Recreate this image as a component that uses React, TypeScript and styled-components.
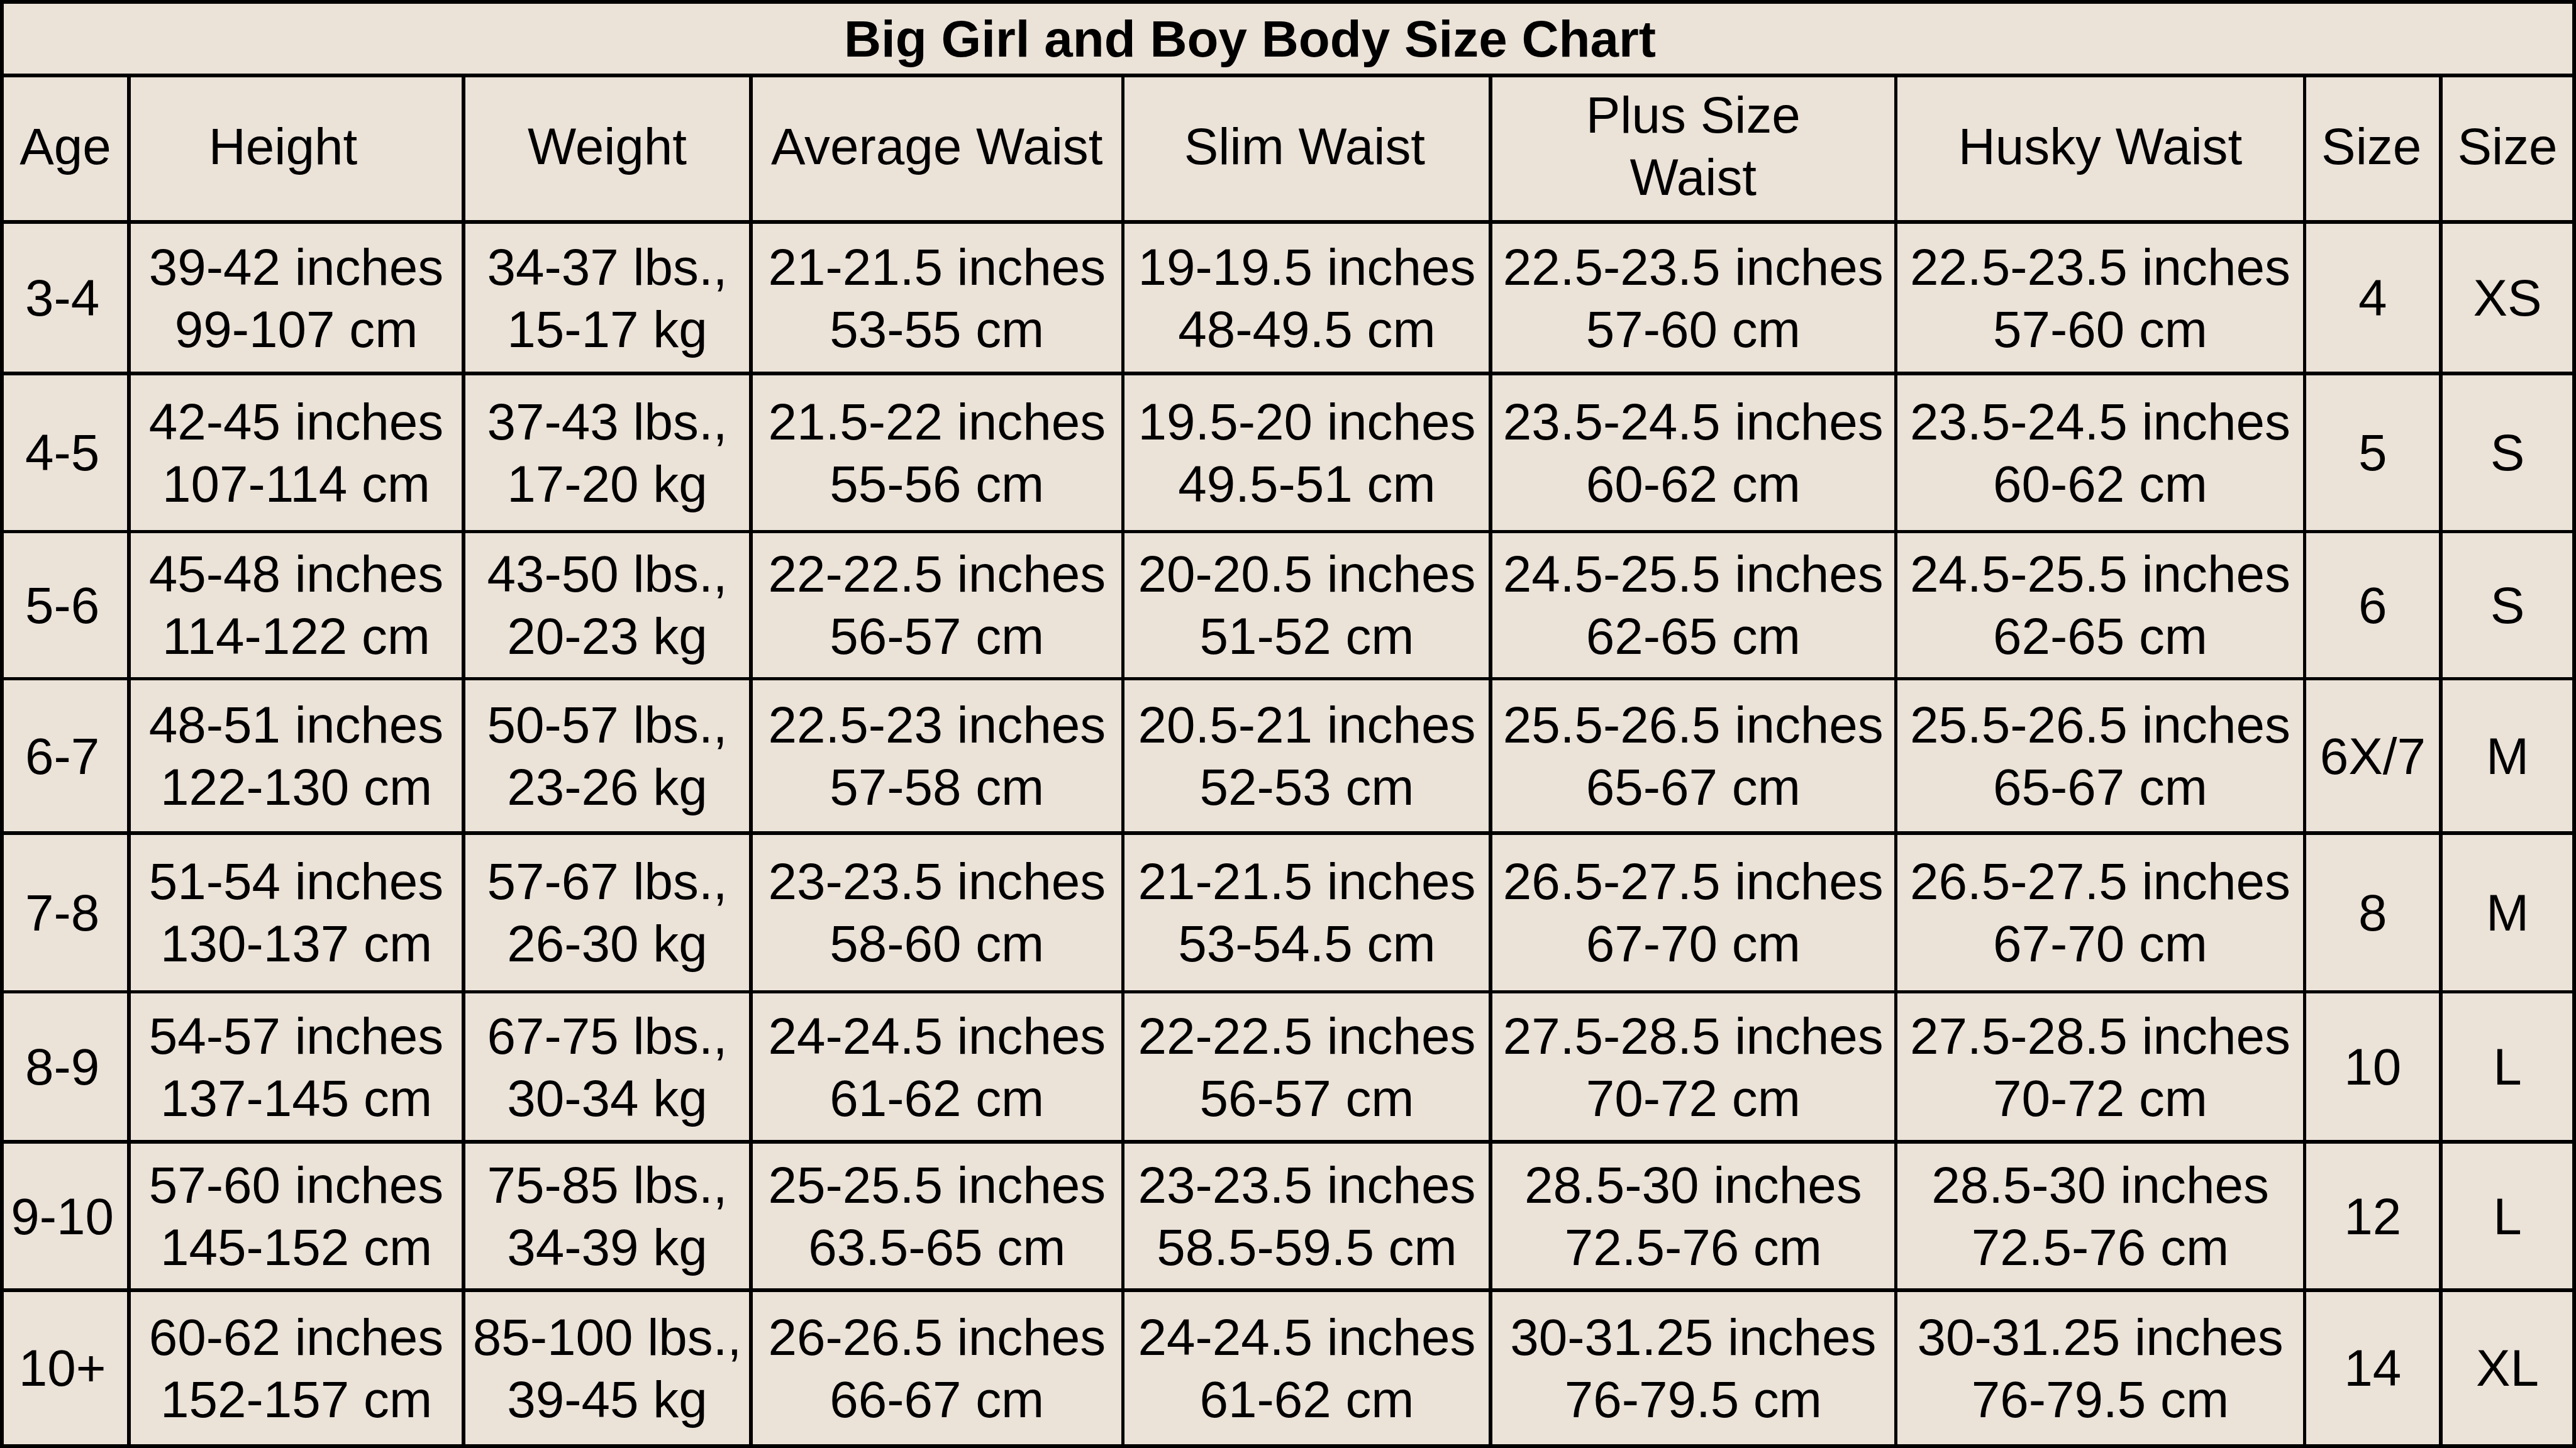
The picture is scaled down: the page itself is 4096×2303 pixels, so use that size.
import React from "react";
import styled, { createGlobalStyle } from "styled-components";

const S = 4096 / 5832;
const px = (v: number) => `${(v * S).toFixed(2)}px`;

const LINE = 8;
const COLS = [280, 749.5, 642.5, 834.5, 824.5, 909, 918, 300, 294];
const ROWS = [159, 324, 335, 350, 325, 342, 351, 332, 328, 345];

const GlobalStyle = createGlobalStyle`
  html, body {
    margin: 0;
    padding: 0;
    background: #ebe2d8;
    overflow: hidden;
  }
  #root {
    width: 4096px;
    height: 2303px;
  }
`;

const Chart = styled.div`
  display: grid;
  grid-template-columns: ${COLS.map(px).join(" ")};
  grid-template-rows: ${ROWS.map(px).join(" ")};
  gap: ${px(LINE)};
  padding: ${px(LINE)};
  background: #000;
  width: max-content;
  font-family: "Liberation Sans", Arial, sans-serif;
  color: #000;
`;

const CellBase = styled.div<{ $shift?: number }>`
  background: #ebe2d8;
  display: flex;
  align-items: center;
  justify-content: center;
  text-align: center;
  white-space: nowrap;
  font-size: ${px(116.5)};
  line-height: ${px(141)};
  overflow: visible;
  padding-right: ${(p) => px(p.$shift ?? 0)};
`;

const TitleCell = styled(CellBase)`
  grid-column: 1 / -1;
  font-weight: 700;
  font-size: ${px(116.5)};
`;

const HeadCell = styled(CellBase)`
  font-weight: 400;
  padding-bottom: ${px(12)};
`;

const DataCell = styled(CellBase)``;

const headers: { lines: string[]; shift?: number }[] = [
  { lines: ["Age"] },
  { lines: ["Height"], shift: 60 },
  { lines: ["Weight"] },
  { lines: ["Average Waist"] },
  { lines: ["Slim Waist"], shift: 10 },
  { lines: ["Plus Size", "Waist"] },
  { lines: ["Husky Waist"] },
  { lines: ["Size"], shift: 6 },
  { lines: ["Size"] },
];

type Row = string[][];

const rows: Row[] = [
  [
    ["3-4"],
    ["39-42 inches", "99-107 cm"],
    ["34-37 lbs.,", "15-17 kg"],
    ["21-21.5 inches", "53-55 cm"],
    ["19-19.5 inches", "48-49.5 cm"],
    ["22.5-23.5 inches", "57-60 cm"],
    ["22.5-23.5 inches", "57-60 cm"],
    ["4"],
    ["XS"],
  ],
  [
    ["4-5"],
    ["42-45 inches", "107-114 cm"],
    ["37-43 lbs.,", "17-20 kg"],
    ["21.5-22 inches", "55-56 cm"],
    ["19.5-20 inches", "49.5-51 cm"],
    ["23.5-24.5 inches", "60-62 cm"],
    ["23.5-24.5 inches", "60-62 cm"],
    ["5"],
    ["S"],
  ],
  [
    ["5-6"],
    ["45-48 inches", "114-122 cm"],
    ["43-50 lbs.,", "20-23 kg"],
    ["22-22.5 inches", "56-57 cm"],
    ["20-20.5 inches", "51-52 cm"],
    ["24.5-25.5 inches", "62-65 cm"],
    ["24.5-25.5 inches", "62-65 cm"],
    ["6"],
    ["S"],
  ],
  [
    ["6-7"],
    ["48-51 inches", "122-130 cm"],
    ["50-57 lbs.,", "23-26 kg"],
    ["22.5-23 inches", "57-58 cm"],
    ["20.5-21 inches", "52-53 cm"],
    ["25.5-26.5 inches", "65-67 cm"],
    ["25.5-26.5 inches", "65-67 cm"],
    ["6X/7"],
    ["M"],
  ],
  [
    ["7-8"],
    ["51-54 inches", "130-137 cm"],
    ["57-67 lbs.,", "26-30 kg"],
    ["23-23.5 inches", "58-60 cm"],
    ["21-21.5 inches", "53-54.5 cm"],
    ["26.5-27.5 inches", "67-70 cm"],
    ["26.5-27.5 inches", "67-70 cm"],
    ["8"],
    ["M"],
  ],
  [
    ["8-9"],
    ["54-57 inches", "137-145 cm"],
    ["67-75 lbs.,", "30-34 kg"],
    ["24-24.5 inches", "61-62 cm"],
    ["22-22.5 inches", "56-57 cm"],
    ["27.5-28.5 inches", "70-72 cm"],
    ["27.5-28.5 inches", "70-72 cm"],
    ["10"],
    ["L"],
  ],
  [
    ["9-10"],
    ["57-60 inches", "145-152 cm"],
    ["75-85 lbs.,", "34-39 kg"],
    ["25-25.5 inches", "63.5-65 cm"],
    ["23-23.5 inches", "58.5-59.5 cm"],
    ["28.5-30 inches", "72.5-76 cm"],
    ["28.5-30 inches", "72.5-76 cm"],
    ["12"],
    ["L"],
  ],
  [
    ["10+"],
    ["60-62 inches", "152-157 cm"],
    ["85-100 lbs.,", "39-45 kg"],
    ["26-26.5 inches", "66-67 cm"],
    ["24-24.5 inches", "61-62 cm"],
    ["30-31.25 inches", "76-79.5 cm"],
    ["30-31.25 inches", "76-79.5 cm"],
    ["14"],
    ["XL"],
  ],
];

const Lines: React.FC<{ lines: string[] }> = ({ lines }) => (
  <span>
    {lines.map((l, i) => (
      <React.Fragment key={i}>
        {i > 0 && <br />}
        {l}
      </React.Fragment>
    ))}
  </span>
);

export default function App() {
  return (
    <>
      <GlobalStyle />
      <Chart>
        <TitleCell $shift={172}>Big Girl and Boy Body Size Chart</TitleCell>
        {headers.map((h, i) => (
          <HeadCell key={`h${i}`} $shift={h.shift}>
            <Lines lines={h.lines} />
          </HeadCell>
        ))}
        {rows.map((r, ri) =>
          r.map((c, ci) => (
            <DataCell key={`r${ri}c${ci}`} $shift={ci === 0 ? 14 : 0}>
              <Lines lines={c} />
            </DataCell>
          ))
        )}
      </Chart>
    </>
  );
}
